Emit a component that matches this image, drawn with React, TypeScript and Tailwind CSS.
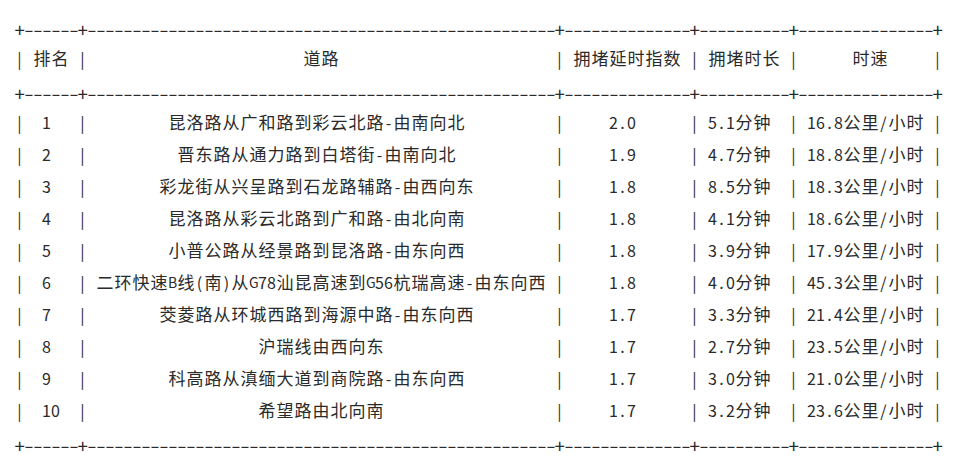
import React from "react";

const widths = [4, 50, 12, 8, 13];

const header = ["排名", "道路", "拥堵延时指数", "拥堵时长", "时速"];

const rows: string[][] = [
  ["1", "昆洛路从广和路到彩云北路-由南向北", "2.0", "5.1分钟", "16.8公里/小时"],
  ["2", "晋东路从通力路到白塔街-由南向北", "1.9", "4.7分钟", "18.8公里/小时"],
  ["3", "彩龙街从兴呈路到石龙路辅路-由西向东", "1.8", "8.5分钟", "18.3公里/小时"],
  ["4", "昆洛路从彩云北路到广和路-由北向南", "1.8", "4.1分钟", "18.6公里/小时"],
  ["5", "小普公路从经景路到昆洛路-由东向西", "1.8", "3.9分钟", "17.9公里/小时"],
  ["6", "二环快速B线(南)从G78汕昆高速到G56杭瑞高速-由东向西", "1.8", "4.0分钟", "45.3公里/小时"],
  ["7", "茭菱路从环城西路到海源中路-由东向西", "1.7", "3.3分钟", "21.4公里/小时"],
  ["8", "沪瑞线由西向东", "1.7", "2.7分钟", "23.5公里/小时"],
  ["9", "科高路从滇缅大道到商院路-由东向西", "1.7", "3.0分钟", "21.0公里/小时"],
  ["10", "希望路由北向南", "1.7", "3.2分钟", "23.6公里/小时"],
];

const isWide = (ch: string) => /[\u2E80-\u9FFF\uF900-\uFAFF\uFF00-\uFF60]/.test(ch);
const isUpper = (ch: string) => /[A-Z]/.test(ch);

const textWidth = (s: string) => [...s].reduce((a, c) => a + (isWide(c) ? 2 : 1), 0);

function center(text: string, width: number) {
  const tw = textWidth(text);
  const excess = width - tw;
  let left = Math.floor(excess / 2);
  let right = excess - left;
  if (excess % 2) {
    if (tw % 2) {
      left = Math.floor(excess / 2);
      right = left + 1;
    } else {
      right = Math.floor(excess / 2);
      left = right + 1;
    }
  }
  return " ".repeat(left) + text + " ".repeat(right);
}

const border = "+" + widths.map((w) => "-".repeat(w + 2)).join("+") + "+";
const rowLine = (cells: string[]) =>
  "|" + cells.map((c, i) => " " + center(c, widths[i]) + " ").join("|") + "|";

const lines = [
  { t: border, b: true },
  { t: rowLine(header), b: false },
  { t: border, b: true },
  ...rows.map((r) => ({ t: rowLine(r), b: false })),
  { t: border, b: true },
];

function Line({ text, isBorder }: { text: string; isBorder: boolean }) {
  return (
    <div className="flex h-8 items-center whitespace-pre">
      {[...text].map((ch, i) => {
        if (isWide(ch)) {
          return (
            <span key={i} className="inline-block w-[18px] shrink-0 text-center">
              {ch}
            </span>
          );
        }
        if (isBorder) {
          return (
            <span key={i} className="inline-block w-[9px] shrink-0 translate-y-[3px] text-center">
              <span className={ch === "-" ? "inline-block scale-x-[1.6]" : "inline-block scale-110"}>{ch}</span>
            </span>
          );
        }
        return (
          <span
            key={i}
            className={
              isUpper(ch)
                ? "inline-block w-[9px] shrink-0 text-center text-[14px]"
                : "inline-block w-[9px] shrink-0 text-center text-[16px]"
            }
          >
            {ch === " " ? "\u00a0" : ch}
          </span>
        );
      })}
    </div>
  );
}

export default function App() {
  return (
    <div
      className="min-h-[464px] w-[959px] bg-white pl-[15px] pt-[10px] text-[17px] leading-8 text-[#2a2a2a]"
      style={{ fontFamily: '"Noto Sans CJK SC", "Noto Sans", sans-serif' }}
    >
      {lines.map((l, i) => (
        <Line key={i} text={l.t} isBorder={l.b} />
      ))}
    </div>
  );
}
